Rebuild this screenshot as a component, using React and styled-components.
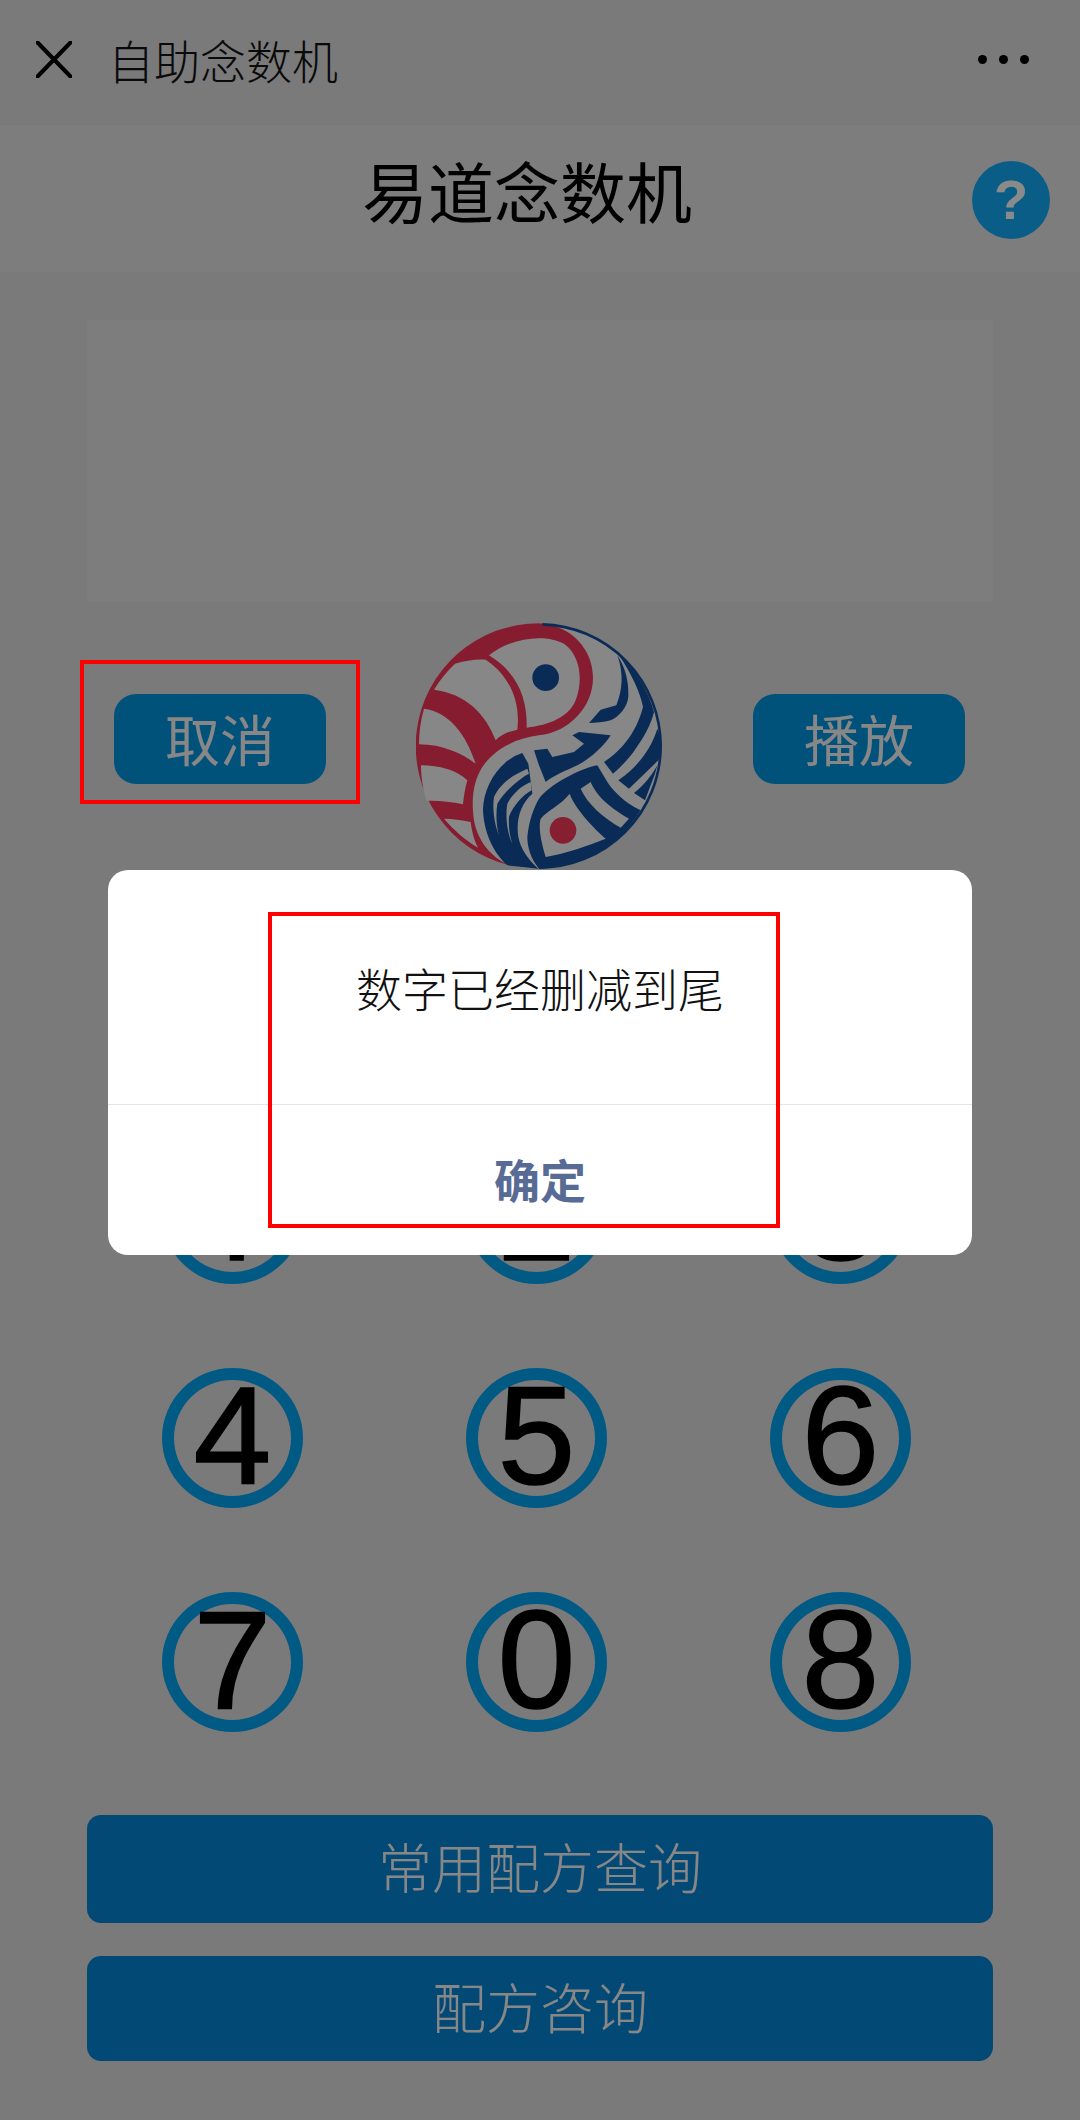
import React from "react";
import styled, { createGlobalStyle } from "styled-components";

const Global = createGlobalStyle`
  html, body { margin: 0; padding: 0; background: #cbcbcc; }
  * { box-sizing: border-box; }
  body { font-family: "Noto Sans CJK SC", "Liberation Sans", sans-serif; }
`;

const Page = styled.div`
  position: relative;
  width: 1080px;
  height: 2120px;
  overflow: hidden;
  background: #cbcbcc;
`;
const Nav = styled.header`
  height: 125px;
  display: flex;
  align-items: center;
  padding: 0 36px;
  background: #cbcbcb;
`;
const NavTitle = styled.div`
  margin: -8px 0 0 36px;
  font-size: 46px;
  font-weight: 300;
  line-height: 60px;
  color: #111;
  flex: 1;
`;
const More = styled.div`
  display: flex;
  gap: 12px;
  margin: -6px 15px 0 0;
  span { width: 9px; height: 9px; border-radius: 50%; background: #000; }
`;
const TitleBar = styled.div`
  position: relative;
  height: 147px;
  display: flex;
  align-items: center;
  justify-content: center;
  padding: 0 26px 20px 0;
  background: #d0d0d0;
`;
const Title = styled.h1`
  margin: 0;
  font-size: 66px;
  line-height: 90px;
  font-weight: 400;
  color: #000;
`;
const Help = styled.div`
  position: absolute;
  left: 972px;
  top: 36px;
  width: 78px;
  height: 78px;
  border-radius: 50%;
  background: #129bdf;
  color: #e6e6e6;
  font: bold 56px/78px "Liberation Sans", sans-serif;
  text-align: center;
`;
const Main = styled.main`
  padding: 48px 87px 0 87px;
`;
const Panel = styled.div`
  height: 282px;
  background: #d1d1d1;
`;
const ActionRow = styled.div`
  margin-top: 20px;
  height: 247px;
  padding: 0 28px 0 27px;
  display: flex;
  align-items: center;
  justify-content: space-between;
`;
const ActionButton = styled.div`
  width: 212px;
  height: 90px;
  margin-bottom: 14px;
  border-radius: 22px;
  background: #0089cb;
  color: #e2e2e2;
  font-size: 55px;
  font-weight: 400;
  line-height: 86px;
  text-align: center;
`;
const LogoSvg = styled.svg`
  width: 247px;
  height: 247px;
  display: block;
`;
const Keypad = styled.div`
  margin: 275px -1px 0 -8px;
  display: grid;
  grid-template-columns: repeat(3, 304px);
  justify-content: center;
  row-gap: 84px;
  justify-items: center;
`;
const Key = styled.div`
  width: 141px;
  height: 140px;
  padding-bottom: 4px;
  border: 12px solid #0096dd;
  border-radius: 50%;
  display: flex;
  align-items: center;
  justify-content: center;
  color: #000;
  font: 400 140px/112px ${(p) => (p.$alt ? "Roboto" : '"Liberation Sans"')}, Arial, sans-serif;
  -webkit-text-stroke: 1.5px #000;
`;
const WideButton = styled.div`
  height: ${(p) => p.$h}px;
  margin-top: ${(p) => p.$mt}px;
  border-radius: 14px;
  background: #057bc5;
  color: #e2e2e2;
  font-size: 54px;
  font-weight: 300;
  line-height: ${(p) => p.$h - 6}px;
  text-align: center;
`;
const Overlay = styled.div`
  position: absolute;
  inset: 0;
  padding-top: 5px;
  display: flex;
  align-items: center;
  justify-content: center;
  background: rgba(0, 0, 0, 0.4);
`;
const Dialog = styled.div`
  width: 864px;
  height: 385px;
  border-radius: 20px;
  background: #fff;
  display: flex;
  flex-direction: column;
`;
const DialogBody = styled.div`
  height: 235px;
  flex: none;
  display: flex;
  align-items: center;
  justify-content: center;
  border-bottom: 1px solid #e4e4e4;
  font-size: 46px;
  font-weight: 300;
  color: #111;
`;
const DialogAction = styled.div`
  flex: 1;
  display: flex;
  align-items: center;
  justify-content: center;
  padding-bottom: 5px;
  font-size: 46px;
  font-weight: 700;
  line-height: 60px;
  color: #576b95;
`;
const RedBox = styled.div`
  position: absolute;
  left: ${(p) => p.$x}px;
  top: ${(p) => p.$y}px;
  width: ${(p) => p.$w}px;
  height: ${(p) => p.$h}px;
  border: 4px solid #ff0000;
`;
const CloseSvg = styled.svg`
  flex: none;
  margin-top: -6px;
`;

const CloseIcon = () => (
  <CloseSvg width="36" height="37" viewBox="0 0 36 37" fill="none" stroke="#000" strokeWidth="4" strokeLinecap="round">
    <path d="M1.5 1.5 L34.5 35.5 M34.5 1.5 L1.5 35.5" />
  </CloseSvg>
);

const RED = "#e03050";
const BLUE = "#11498e";
const LIGHT = "#e2e2e2";

const Logo = () => (
  <LogoSvg viewBox="111 65 741 741">
    <circle cx="480" cy="437" r="368" fill={LIGHT} />
    <path d="M480 69 C580 75 642 150 642 232 C642 320 570 395 480 405 C420 412 350 440 310 500 C285 540 275 590 285 660 C295 720 335 770 389 794 A368 368 0 0 1 480 69 Z" fill={RED} />
    <g fill={LIGHT}>
      <path d="M330 165 C400 110 500 100 555 130 C610 170 610 250 590 300 C570 350 510 375 443 382 C445 300 420 220 330 165 Z" />
      <path d="M228 190 C255 182 290 176 320 178 C390 225 425 300 415 388 C390 393 368 402 350 420 C320 340 260 280 165 268 C182 240 205 212 228 190 Z" />
      <path d="M135 325 C210 335 260 400 290 490 C250 460 190 432 120 432 C120 395 125 360 135 325 Z" />
      <path d="M126 495 C180 495 235 510 265 540 C258 565 254 590 252 612 C215 605 175 600 143 602 C132 570 126 530 126 495 Z" />
      <path d="M195 655 C220 655 250 660 275 665 C278 690 285 720 297 742 C260 720 225 690 195 655 Z" />
    </g>
    <circle cx="500" cy="232" r="40" fill={BLUE} />
    <g fill={BLUE}>
      <path d="M490 72 A365 365 0 0 1 845 437 A365 365 0 0 1 480 802" fill="none" stroke={BLUE} strokeWidth="8" />
      <path d="M720 165 A360 360 0 0 1 825 335 C815 375 795 410 770 445 C750 475 725 500 702 520 L675 485 C720 455 770 405 792 320 C785 280 755 215 720 165 Z" />
      <path d="M715 165 C735 195 750 235 748 290 C745 320 720 350 695 360 C675 366 650 368 630 368 L665 328 L712 315 C730 270 735 220 715 165 Z" />
      <path d="M835 385 C845 405 848 420 848 437 C848 452 845 466 838 480 L750 565 L718 540 C770 505 815 450 835 385 Z" />
      <path d="M835 495 L828 520 L798 600 L765 578 C795 555 815 530 835 495 Z" />
      <path d="M465 450 L505 445 L520 470 L585 455 L615 430 L580 405 L600 395 L695 405 C680 430 650 460 620 480 C590 500 560 510 540 520 C525 528 510 535 500 545 L480 495 Z" />
      <path fillRule="evenodd" d="M445 710 C450 660 465 620 480 595 C510 555 600 505 655 495 L685 545 C700 570 740 610 785 630 A368 368 0 0 1 480 805 C455 775 445 740 445 710 Z M572 580 C545 615 505 630 485 655 C478 680 485 720 500 770 C560 760 630 735 680 715 C640 680 585 620 572 580 Z M605 565 L635 545 C650 580 680 615 750 655 L725 682 C670 650 625 610 605 565 Z" />
      <path d="M430 458 C360 480 312 560 312 630 C315 700 345 760 385 795 L478 805 C445 775 425 745 418 710 C410 660 425 610 460 580 L448 490 Z" />
    </g>
    <g fill={LIGHT}>
      <path d="M445 505 L450 520 C420 535 375 575 355 610 C350 640 352 680 360 705 C345 670 340 620 345 590 C365 545 410 520 445 505 Z" />
      <path d="M455 545 L458 570 C430 585 400 620 390 650 C388 680 392 705 400 730 C385 700 378 650 385 610 C400 580 430 555 455 545 Z" />
    </g>
    <circle cx="552" cy="690" r="40" fill="#e0354f" />
  </LogoSvg>
);

export default function App() {
  return (
    <>
      <Global />
      <Page>
        <Nav>
          <CloseIcon />
          <NavTitle>自助念数机</NavTitle>
          <More><span /><span /><span /></More>
        </Nav>
        <TitleBar>
          <Title>易道念数机</Title>
          <Help>?</Help>
        </TitleBar>
        <Main>
          <Panel />
          <ActionRow>
            <ActionButton>取消</ActionButton>
            <Logo />
            <ActionButton>播放</ActionButton>
          </ActionRow>
          <Keypad>
            {["1", "2", "3", "4", "5", "6", "7", "0", "8"].map((d) => (
              <Key key={d} $alt={d === "1"}>{d}</Key>
            ))}
          </Keypad>
          <WideButton $h={108} $mt={83}>常用配方查询</WideButton>
          <WideButton $h={105} $mt={33}>配方咨询</WideButton>
        </Main>
        <Overlay>
          <Dialog>
            <DialogBody>数字已经删减到尾</DialogBody>
            <DialogAction>确定</DialogAction>
          </Dialog>
        </Overlay>
        <RedBox $x={80} $y={660} $w={280} $h={144} />
        <RedBox $x={268} $y={912} $w={512} $h={316} />
      </Page>
    </>
  );
}
